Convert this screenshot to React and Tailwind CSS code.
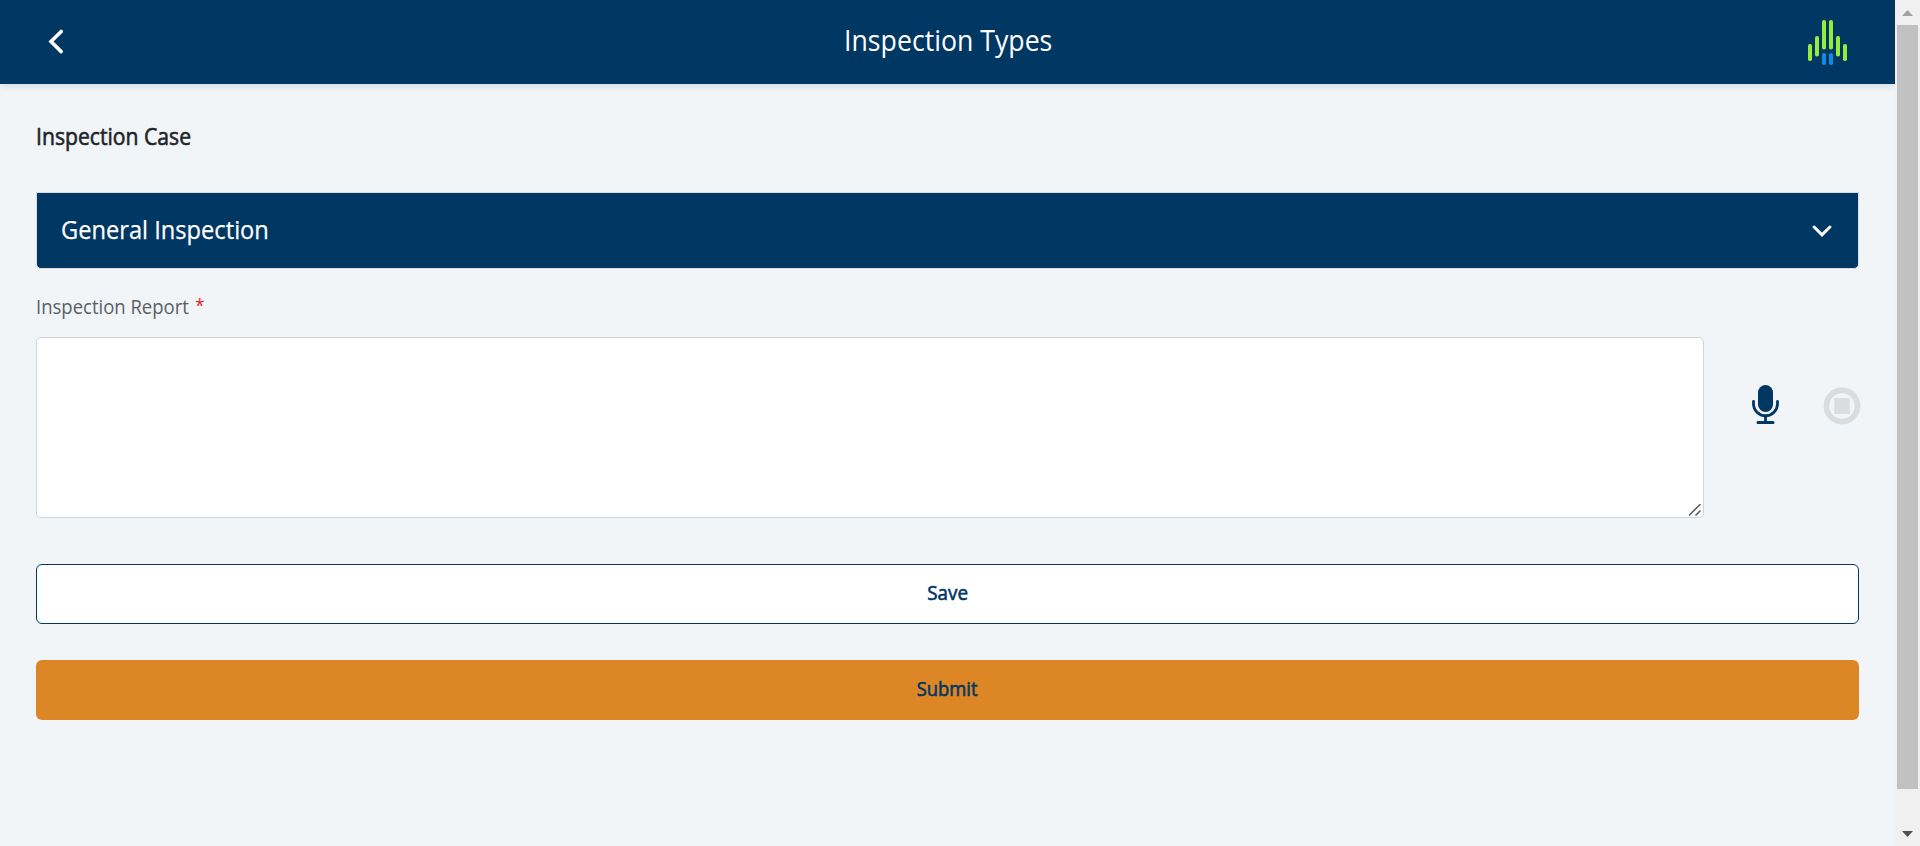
function BackIcon() {
  return (
    <svg width="16" height="26" viewBox="0 0 16 26" fill="none" stroke="white" strokeWidth="3.6" strokeLinecap="round">
      <path d="M13.2 2.4 3 12.6 13.2 22.6" />
    </svg>
  );
}

function ChevronDown() {
  return (
    <svg width="20" height="12" viewBox="0 0 20 12" fill="none" stroke="white" strokeWidth="3" strokeLinecap="round">
      <path d="m2.1 2 7.9 7.8L17.9 2" />
    </svg>
  );
}

function Logo() {
  return (
    <svg width="40" height="46" viewBox="0 0 40 46">
      <g fill="#97eb3f">
        <rect x="0" y="24" width="4" height="17" rx="1.8" />
        <rect x="7" y="16" width="4" height="20.5" rx="1.8" />
        <rect x="14" y="0" width="4" height="29.5" rx="1.8" />
        <rect x="21" y="0" width="4" height="29.5" rx="1.8" />
        <rect x="28" y="16" width="4" height="20.5" rx="1.8" />
        <rect x="35" y="24" width="4" height="17" rx="1.8" />
      </g>
      <g fill="#1389e0">
        <rect x="14" y="33" width="4" height="12" rx="1.8" />
        <rect x="21" y="33" width="4" height="12" rx="1.8" />
      </g>
    </svg>
  );
}

function MicIcon() {
  return (
    <svg width="28" height="40" viewBox="0 0 28 40">
      <rect x="6" y="0" width="15" height="27" rx="7.5" fill="#003763" />
      <g fill="none" stroke="#003763" strokeWidth="2.8" strokeLinecap="round">
        <path d="M1.5 16.5v2.2a12 12 0 0 0 24 0v-2.2M13.5 31v6" />
        <path d="M6 37.5h15" strokeWidth="3" />
      </g>
    </svg>
  );
}

function StopIcon() {
  return (
    <svg width="38" height="38" viewBox="0 0 38 38">
      <circle cx="19" cy="19" r="15.6" fill="none" stroke="#dcdcdc" strokeWidth="5.6" />
      <rect x="11.2" y="11.2" width="15.6" height="15.8" fill="#dcdcdc" />
    </svg>
  );
}

function ResizeGrip() {
  return (
    <svg width="12" height="12" viewBox="0 0 12 12" stroke="#555" strokeWidth="1.5">
      <path d="M0 11.5 11.5 0M6.5 11.5l5-5" />
    </svg>
  );
}

function Scrollbar() {
  return (
    <div className="flex h-full w-[25px] shrink-0 flex-col items-center bg-[#f0f0f0]">
      <div className="flex h-[25px] items-center">
        <svg width="11" height="6" viewBox="0 0 11 6" fill="#a3a3a3"><path d="M0 6 5.5 0 11 6z" /></svg>
      </div>
      <div className="h-[764px] w-[21px] bg-[#c1c1c1]" />
      <div className="mt-auto flex h-[25px] items-center">
        <svg width="11" height="6" viewBox="0 0 11 6" fill="#505050"><path d="M0 0 5.5 6 11 0z" /></svg>
      </div>
    </div>
  );
}

export default function App() {
  return (
    <div className="flex h-[846px] w-[1920px] overflow-hidden bg-[#f1f5f8] font-['Open_Sans','Noto_Sans',sans-serif]">
      <div className="flex min-w-0 flex-1 flex-col">
        <header className="flex h-[84px] shrink-0 items-center justify-between bg-[#003763] pr-[47px] pl-12 shadow-[0_2px_8px_rgba(0,0,0,0.12)]">
          <button className="flex w-10 items-center" aria-label="Back"><BackIcon /></button>
          <h1 className="scale-x-[0.92] pb-1 text-[29px] leading-10 text-white">Inspection Types</h1>
          <div className="pt-px"><Logo /></div>
        </header>
        <main className="flex flex-col pr-9 pl-9">
          <h2 className="mt-9 h-8 origin-left scale-x-[0.92] text-[23px] leading-8 text-[#212529] [-webkit-text-stroke:0.6px_#212529]">Inspection Case</h2>
          <section className="mt-10 flex h-[77px] items-center justify-between rounded-b-[5px] border border-[#d9dde1] bg-[#003763] pr-[26px] pl-6">
            <span className="origin-left scale-x-[0.91] pb-1 text-[26px] leading-9 text-white [-webkit-text-stroke:0.25px_white]">General Inspection</span>
            <ChevronDown />
          </section>
          <label className="mt-[22px] flex h-8 origin-left scale-x-[0.925] text-[20px] leading-8 text-[#5a6066]">
            Inspection Report<span className="ml-[7px] text-[18px] leading-[29px] text-[#e02020]">*</span>
          </label>
          <div className="mt-[14px] flex h-[181px]">
            <div className="flex w-[1668px] shrink-0 items-end justify-end rounded-[5px] border border-[#ced4da] bg-white pr-[2px] pb-px">
              <ResizeGrip />
            </div>
            <div className="mt-12 ml-12 flex shrink-0 items-start">
              <MicIcon />
              <div className="mt-[2px] ml-[43px] flex w-[38px]"><StopIcon /></div>
            </div>
          </div>
          <button className="mt-[46px] h-[60px] rounded-[6px] border border-[#003763] bg-white pb-0.5 text-[20px] text-[#003763]">
            <span className="inline-block scale-x-[0.94] [-webkit-text-stroke:0.6px_#003763]">Save</span>
          </button>
          <button className="mt-9 h-[60px] rounded-[6px] bg-[#dd8626] pb-0.5 text-[20px] text-[#003763]">
            <span className="inline-block scale-x-[0.92] [-webkit-text-stroke:0.6px_#003763]">Submit</span>
          </button>
        </main>
      </div>
      <Scrollbar />
    </div>
  );
}
